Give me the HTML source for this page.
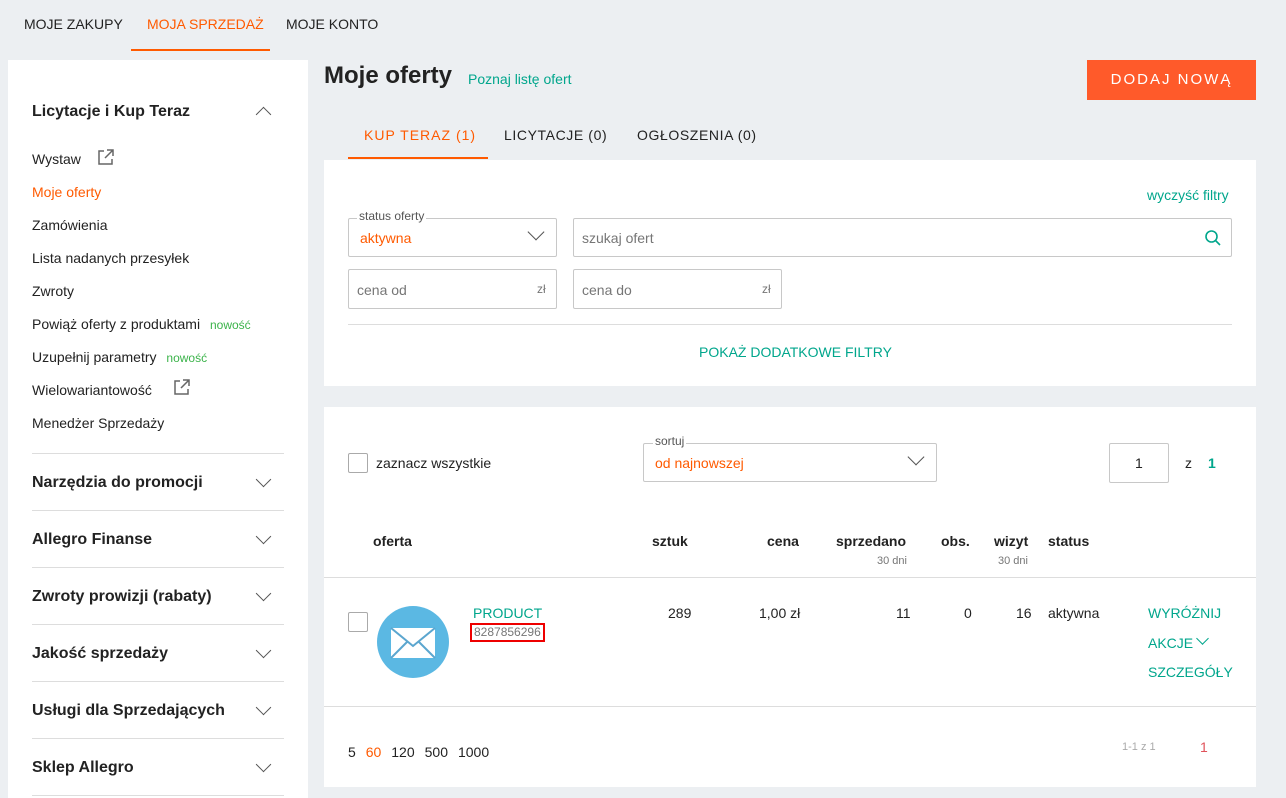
<!DOCTYPE html>
<html><head><meta charset="utf-8"><style>
*{box-sizing:border-box;margin:0;padding:0}
body{width:1286px;height:798px;background:#eceff2;font-family:"Liberation Sans",sans-serif;color:#222;font-size:14px;position:relative;overflow:hidden}
.a{position:absolute;white-space:nowrap}
.side{font-size:14px;color:#222}
.or{color:#ff5a00 !important}.tl{color:#00a68c}
.card{position:absolute;background:#fff}
.chev{position:absolute;width:11px;height:11px;border-right:1.5px solid #555;border-bottom:1.5px solid #555;transform:rotate(45deg)}
.sh{font-weight:bold;font-size:16px}
.sep{position:absolute;left:32px;width:252px;height:1px;background:#ddd}
.inp{position:absolute;border:1px solid #c8c8c8;border-radius:2px;background:#fff}
.ph{color:#767676;font-size:14px}
.cb{position:absolute;width:20px;height:20px;border:1px solid #aaa;border-radius:2px;background:#fff}
.th{font-weight:bold;font-size:14px}
.sm{font-size:11px;color:#767676}
</style></head><body>
<div class="a" style="left:24px;top:16px;font-size:14px">MOJE ZAKUPY</div>
<div class="a or" style="left:147px;top:16px;font-size:14px">MOJA SPRZEDAŻ</div>
<div class="a" style="left:131px;top:49px;width:139px;height:2px;background:#ff5a00"></div>
<div class="a" style="left:286px;top:16px;font-size:14px">MOJE KONTO</div>

<div class="card" style="left:8px;top:60px;width:300px;height:738px"></div>
<div class="a sh" style="left:32px;top:103px">Licytacje i Kup Teraz</div>
<div class="chev" style="left:258px;top:109px;transform:rotate(225deg)"></div>
<div class="a side" style="left:32px;top:151px">Wystaw</div>
<svg class="a" style="left:97px;top:148px" width="18" height="18" viewBox="0 0 18 18" fill="none" stroke="#666" stroke-width="1.5"><path d="M7 3H2v13h13v-5M10 2h6v6M16 2L8 10"/></svg>
<div class="a side or" style="left:32px;top:184px">Moje oferty</div>
<div class="a side" style="left:32px;top:217px">Zamówienia</div>
<div class="a side" style="left:32px;top:250px">Lista nadanych przesyłek</div>
<div class="a side" style="left:32px;top:283px">Zwroty</div>
<div class="a side" style="left:32px;top:316px">Powiąż oferty z produktami <span style="color:#3bb34a;font-size:12px;margin-left:6px">nowość</span></div>
<div class="a side" style="left:32px;top:349px">Uzupełnij parametry <span style="color:#3bb34a;font-size:12px;margin-left:6px">nowość</span></div>
<div class="a side" style="left:32px;top:382px">Wielowariantowość</div>
<svg class="a" style="left:173px;top:378px" width="18" height="18" viewBox="0 0 18 18" fill="none" stroke="#666" stroke-width="1.5"><path d="M7 3H2v13h13v-5M10 2h6v6M16 2L8 10"/></svg>
<div class="a side" style="left:32px;top:415px">Menedżer Sprzedaży</div>
<div class="sep" style="top:453px"></div>
<div class="a sh" style="left:32px;top:474px">Narzędzia do promocji</div><div class="chev" style="left:258px;top:474px"></div>
<div class="sep" style="top:510px"></div>
<div class="a sh" style="left:32px;top:531px">Allegro Finanse</div><div class="chev" style="left:258px;top:531px"></div>
<div class="sep" style="top:567px"></div>
<div class="a sh" style="left:32px;top:588px">Zwroty prowizji (rabaty)</div><div class="chev" style="left:258px;top:588px"></div>
<div class="sep" style="top:624px"></div>
<div class="a sh" style="left:32px;top:645px">Jakość sprzedaży</div><div class="chev" style="left:258px;top:645px"></div>
<div class="sep" style="top:681px"></div>
<div class="a sh" style="left:32px;top:702px">Usługi dla Sprzedających</div><div class="chev" style="left:258px;top:702px"></div>
<div class="sep" style="top:738px"></div>
<div class="a sh" style="left:32px;top:759px">Sklep Allegro</div><div class="chev" style="left:258px;top:759px"></div>
<div class="sep" style="top:795px"></div>

<div class="a" style="left:324px;top:62px;font-size:24px;font-weight:bold;color:#222">Moje oferty</div>
<div class="a tl" style="left:468px;top:71px;font-size:14px">Poznaj listę ofert</div>
<div class="a" style="left:1087px;top:60px;width:169px;height:40px;background:#ff5a2a;color:#fff;font-size:15px;letter-spacing:2px;text-align:center;line-height:40px">DODAJ NOWĄ</div>
<div class="a or" style="left:364px;top:127px;letter-spacing:1px">KUP TERAZ (1)</div>
<div class="a" style="left:348px;top:157px;width:140px;height:2px;background:#ff5a00"></div>
<div class="a" style="left:504px;top:127px;letter-spacing:0.6px">LICYTACJE (0)</div>
<div class="a" style="left:637px;top:127px;letter-spacing:0.6px">OGŁOSZENIA (0)</div>

<div class="card" style="left:324px;top:160px;width:932px;height:226px"></div>
<div class="a tl" style="left:1147px;top:187px">wyczyść filtry</div>
<div class="inp" style="left:348px;top:218px;width:209px;height:39px"></div>
<div class="a" style="left:357px;top:209px;background:#fff;padding:0 2px;font-size:12px;color:#555">status oferty</div>
<div class="a or" style="left:360px;top:230px">aktywna</div>
<div class="chev" style="left:530px;top:226px;width:12px;height:12px"></div>
<div class="inp" style="left:573px;top:218px;width:659px;height:39px"></div>
<div class="a ph" style="left:582px;top:230px">szukaj ofert</div>
<svg class="a" style="left:1204px;top:229px" width="18" height="18" viewBox="0 0 18 18" fill="none" stroke="#00a68c" stroke-width="1.6"><circle cx="7.5" cy="7.5" r="5.5"/><path d="M11.5 11.5L16 16"/></svg>
<div class="inp" style="left:348px;top:269px;width:209px;height:40px"></div>
<div class="a ph" style="left:357px;top:282px">cena od</div><div class="a ph" style="left:537px;top:282px;font-size:12px">zł</div>
<div class="inp" style="left:573px;top:269px;width:209px;height:40px"></div>
<div class="a ph" style="left:582px;top:282px">cena do</div><div class="a ph" style="left:762px;top:282px;font-size:12px">zł</div>
<div class="a" style="left:348px;top:324px;width:884px;height:1px;background:#ddd"></div>
<div class="a tl" style="left:699px;top:344px">POKAŻ DODATKOWE FILTRY</div>

<div class="card" style="left:324px;top:407px;width:932px;height:380px"></div>
<div class="cb" style="left:348px;top:453px"></div>
<div class="a" style="left:376px;top:455px">zaznacz wszystkie</div>
<div class="inp" style="left:643px;top:443px;width:294px;height:39px"></div>
<div class="a" style="left:653px;top:434px;background:#fff;padding:0 2px;font-size:12px;color:#555">sortuj</div>
<div class="a or" style="left:655px;top:455px">od najnowszej</div>
<div class="chev" style="left:910px;top:451px;width:12px;height:12px"></div>
<div class="inp" style="left:1109px;top:443px;width:60px;height:40px"></div>
<div class="a" style="left:1135px;top:455px">1</div>
<div class="a" style="left:1185px;top:455px">z</div><div class="a tl" style="left:1208px;top:455px;font-weight:bold">1</div>

<div class="a th" style="left:373px;top:533px">oferta</div>
<div class="a th" style="left:652px;top:533px">sztuk</div>
<div class="a th" style="left:767px;top:533px">cena</div>
<div class="a th" style="left:836px;top:533px">sprzedano</div>
<div class="a sm" style="left:877px;top:555px">30 dni</div>
<div class="a th" style="left:941px;top:533px">obs.</div>
<div class="a th" style="left:994px;top:533px">wizyt</div>
<div class="a sm" style="left:998px;top:555px">30 dni</div>
<div class="a th" style="left:1048px;top:533px">status</div>
<div class="a" style="left:324px;top:577px;width:932px;height:1px;background:#ddd"></div>

<div class="cb" style="left:348px;top:612px"></div>
<svg class="a" style="left:377px;top:606px" width="72" height="72" viewBox="0 0 72 72"><circle cx="36" cy="36" r="36" fill="#5bb8e3"/><rect x="14" y="22" width="44" height="30" fill="#fff"/><path d="M14 22L36 40L58 22M14 52L30 36M58 52L42 36" fill="none" stroke="#5ba6cf" stroke-width="2"/></svg>
<div class="a tl" style="left:473px;top:605px">PRODUCT</div>
<div class="a" style="left:470px;top:623px;width:75px;height:19px;border:2px solid #e00;font-size:12px;color:#777;line-height:15px;padding-left:2px">8287856296</div>
<div class="a" style="left:668px;top:605px">289</div>
<div class="a" style="left:759px;top:605px">1,00 zł</div>
<div class="a" style="left:896px;top:605px">11</div>
<div class="a" style="left:964px;top:605px">0</div>
<div class="a" style="left:1016px;top:605px">16</div>
<div class="a" style="left:1048px;top:605px">aktywna</div>
<div class="a tl" style="left:1148px;top:605px">WYRÓŻNIJ</div>
<div class="a tl" style="left:1148px;top:635px">AKCJE</div>
<div class="chev" style="left:1198px;top:634px;width:9px;height:9px;border-color:#00a68c"></div>
<div class="a tl" style="left:1148px;top:664px">SZCZEGÓŁY</div>
<div class="a" style="left:324px;top:706px;width:932px;height:1px;background:#ddd"></div>
<div class="a" style="left:348px;top:744px">5 <span class="or" style="margin-left:6px">60</span><span style="margin-left:10px">120</span><span style="margin-left:10px">500</span><span style="margin-left:10px">1000</span></div>
<div class="a" style="left:1122px;top:741px;font-size:11px;color:#aaa">1-1 z 1</div>
<div class="a" style="left:1200px;top:739px;color:#e0525a">1</div>
</body></html>
